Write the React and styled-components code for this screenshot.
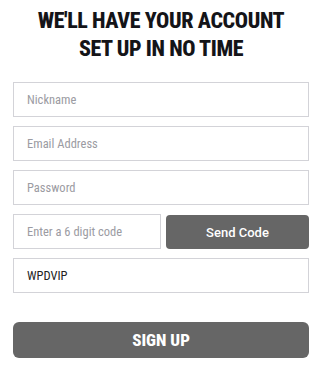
import React from 'react';
import styled, { createGlobalStyle } from 'styled-components';

const GlobalStyle = createGlobalStyle`
  * {
    box-sizing: border-box;
  }
  body {
    margin: 0;
    background: #ffffff;
  }
`;

const Wrapper = styled.div`
  width: 296px;
  margin-left: 13px;
  padding-top: 7px;
`;

const Headline = styled.h1`
  margin: 0 0 19px;
  font-family: Roboto, 'Liberation Sans', sans-serif;
  font-stretch: 75%;
  font-weight: 800;
  font-size: 22px;
  line-height: 28px;
  letter-spacing: -0.4px;
  color: #141418;
  text-align: center;
`;

const Form = styled.form`
  display: flex;
  flex-direction: column;
  gap: 9px;
`;

const Row = styled.div`
  display: flex;
  gap: 5px;
`;

const Input = styled.input`
  display: block;
  width: ${({ $width }) => $width || '100%'};
  height: 35px;
  padding: 0 12px 0 13px;
  border: 1px solid #d3d3d8;
  border-radius: 0;
  outline: none;
  font-family: Roboto, 'Liberation Sans', sans-serif;
  font-stretch: 75%;
  font-size: 12.5px;
  color: #222;
  background: #fff;

  &::placeholder {
    color: #9b9ba2;
  }
`;

const SendButton = styled.button`
  flex: 1;
  height: 34px;
  margin-top: 1px;
  border: none;
  border-radius: 4px;
  background: #666666;
  color: #ffffff;
  font-family: Roboto, 'Liberation Sans', sans-serif;
  font-weight: 500;
  font-size: 13px;
`;

const SignUpButton = styled.button`
  width: 100%;
  height: 36px;
  margin-top: 20px;
  border: none;
  border-radius: 6px;
  background: #666666;
  color: #ffffff;
  font-family: Roboto, 'Liberation Sans', sans-serif;
  font-stretch: 75%;
  font-weight: 800;
  font-size: 17px;
`;

const App = () => {
  return (
    <Wrapper>
      <GlobalStyle />
      <Headline>
        WE'LL HAVE YOUR ACCOUNT
        <br />
        SET UP IN NO TIME
      </Headline>
      <Form onSubmit={(e) => e.preventDefault()}>
        <Input placeholder="Nickname" />
        <Input placeholder="Email Address" />
        <Input type="password" placeholder="Password" />
        <Row>
          <Input $width="148px" placeholder="Enter a 6 digit code" />
          <SendButton type="button">Send Code</SendButton>
        </Row>
        <Input defaultValue="WPDVIP" />
        <SignUpButton type="submit">SIGN UP</SignUpButton>
      </Form>
    </Wrapper>
  );
};

export default App;
